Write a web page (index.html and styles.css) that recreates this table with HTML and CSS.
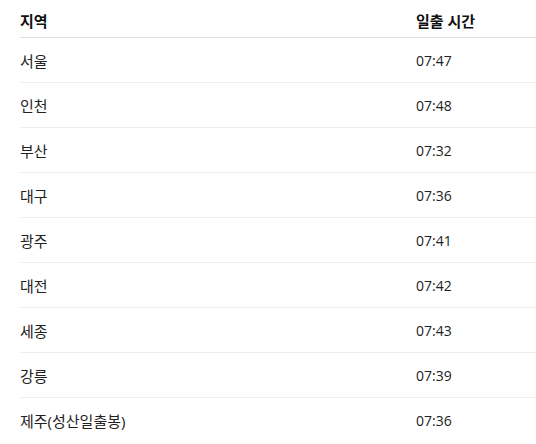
FILE: index.html
```html
<!DOCTYPE html>
<html lang="ko">
<head>
    <meta charset="UTF-8">
    <meta name="viewport" content="width=device-width, initial-scale=1.0">
    <title>일출 시간</title>
    <link rel="stylesheet" href="styles.css">
</head>
<body>
    <table class="sunrise">
        <thead>
            <tr>
                <th class="col-region">지역</th>
                <th>일출 시간</th>
            </tr>
        </thead>
        <tbody>
            <tr><td>서울</td><td class="time">07:47</td></tr>
            <tr><td>인천</td><td class="time">07:48</td></tr>
            <tr><td>부산</td><td class="time">07:32</td></tr>
            <tr><td>대구</td><td class="time">07:36</td></tr>
            <tr><td>광주</td><td class="time">07:41</td></tr>
            <tr><td>대전</td><td class="time">07:42</td></tr>
            <tr><td>세종</td><td class="time">07:43</td></tr>
            <tr><td>강릉</td><td class="time">07:39</td></tr>
            <tr><td>제주(성산일출봉)</td><td class="time">07:36</td></tr>
        </tbody>
    </table>
</body>
</html>
```

FILE: styles.css
```css
body {
    margin: 0;
    padding: 0 0 0 20px;
    font-family: "Open Sans", "Noto Sans CJK KR", sans-serif;
    font-size: 15px;
    color: #222;
    background: #fff;
}
.sunrise {
    width: 100%;
    border-collapse: collapse;
}
.sunrise th,
.sunrise td {
    text-align: left;
    padding: 0;
    line-height: 20px;
}
.sunrise th {
    font-weight: bold;
    color: #111;
    padding: 11px 0 6px;
    border-bottom: 1px solid #ddd;
}
.sunrise td {
    padding: 13px 0 11px;
    border-bottom: 1px solid #eee;
}
.sunrise tr:last-child td {
    border-bottom: none;
}
.sunrise .time {
    font-size: 14px;
}
.sunrise .col-region {
    width: 396px;
}
```
